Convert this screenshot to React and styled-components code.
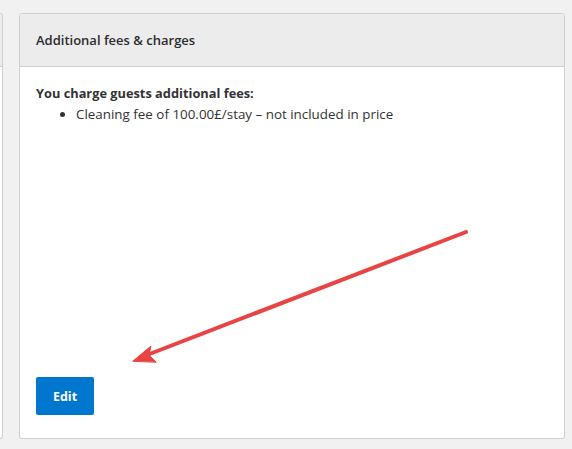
import React from 'react';
import styled, { createGlobalStyle } from 'styled-components';

const GlobalStyle = createGlobalStyle`
  html, body {
    margin: 0;
    padding: 0;
    background: #f1f1f1;
  }
  body {
    font-family: 'Open Sans', 'Noto Sans', sans-serif;
    color: #333;
  }
`;

const Page = styled.div`
  position: relative;
  display: flex;
  gap: 16px;
  height: 449px;
  box-sizing: border-box;
  padding: 13px 7px 10px 0;
`;

const Card = styled.section`
  display: flex;
  flex-direction: column;
  background: #fff;
  border: 1px solid #cfcfcf;
  border-radius: 3px;
  overflow: hidden;
  ${({ $stub }) =>
    $stub
      ? `
    width: 2px;
    border-left: none;
    border-radius: 0 3px 3px 0;
  `
      : `
    flex: 1;
  `}
`;

const Header = styled.header`
  height: 52px;
  flex-shrink: 0;
  display: flex;
  align-items: center;
  padding: 0 16px;
  background: #ececec;
  border-bottom: 1px solid #d0d0d0;
  font-size: 13px;
  font-weight: 600;
  color: #2c2c2c;
  white-space: nowrap;
`;

const Body = styled.div`
  flex: 1;
  display: flex;
  flex-direction: column;
  padding: 16px 16px 23px;
  font-size: 13.4px;
  line-height: 20px;
`;

const Lead = styled.p`
  margin: 0;
  font-size: 12.8px;
  font-weight: 700;
`;

const FeeList = styled.ul`
  margin: 1px 0 0;
  padding-left: 40px;

  li {
    margin: 0;
  }
`;

const EditButton = styled.button`
  margin-top: auto;
  align-self: flex-start;
  width: 58px;
  height: 38px;
  border: none;
  border-radius: 2px;
  background: #0077cf;
  color: #fff;
  font-family: 'Open Sans', 'Noto Sans', sans-serif;
  font-size: 12.5px;
  font-weight: 700;
  cursor: pointer;
`;

const Overlay = styled.svg`
  position: absolute;
  inset: 0;
  pointer-events: none;
`;

const App = () => {
  const fees = ['Cleaning fee of 100.00£/stay – not included in price'];

  return (
    <>
      <GlobalStyle />
      <Page>
        <Card $stub>
          <Header style={{ padding: 0 }} />
        </Card>
        <Card>
          <Header>Additional fees &amp; charges</Header>
          <Body>
            <Lead>You charge guests additional fees:</Lead>
            <FeeList>
              {fees.map((fee, i) => (
                <li key={i}>{fee}</li>
              ))}
            </FeeList>
            <EditButton>Edit</EditButton>
          </Body>
        </Card>
        <Overlay width="572" height="449" viewBox="0 0 572 449">
          <g fill="#e94444" stroke="#e94444" strokeLinecap="round">
            <line x1="466" y1="232" x2="147" y2="355" strokeWidth="4" />
            <polygon points="133,361 151,346 149,355 156,362" strokeWidth="1" strokeLinejoin="round" />
          </g>
        </Overlay>
      </Page>
    </>
  );
};

export default App;
